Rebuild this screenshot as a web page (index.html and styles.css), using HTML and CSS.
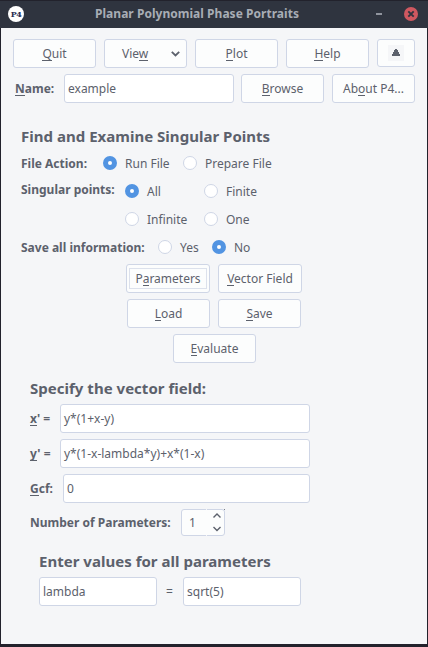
FILE: index.html
```
<!DOCTYPE html>
<html lang="en">
<head>
<meta charset="utf-8">
<title>Planar Polynomial Phase Portraits</title>
<link rel="stylesheet" href="styles.css">
</head>
<body>
<div class="window">
  <header class="titlebar">
    <span class="logo">P4</span>
    <h1 class="title">Planar Polynomial Phase Portraits</h1>
    <span class="minimize"></span>
    <svg class="close" width="14" height="14" viewBox="0 0 14 14"><circle cx="7" cy="7" r="7" fill="#cf5860"/><path d="M4.3 4.3l5.4 5.4M9.7 4.3l-5.4 5.4" stroke="#2f343f" stroke-width="1.9"/></svg>
  </header>
  <main class="content">
    <div class="row toolbar">
      <div class="btn"><span><u>Q</u>uit</span></div>
      <div class="btn menu"><span>Vie<u>w</u></span><svg class="chevron" width="9" height="6" viewBox="0 0 9 6"><path d="M.8 .8l3.7 3.7L8.2 .8" fill="none" stroke="#5c616c" stroke-width="1.8"/></svg></div>
      <div class="btn"><span><u>P</u>lot</span></div>
      <div class="btn"><span><u>H</u>elp</span></div>
      <div class="btn up"><span class="up-icon"><svg width="8" height="8" viewBox="0 0 8 8"><path d="M3 0h2v1h1v2h1v2h1v2H0V5h1V3h1V1h1z" fill="#5c616c"/></svg></span></div>
    </div>
    <div class="row name-row">
      <span class="label name-label"><u>N</u>ame:</span>
      <div class="field name-field">example</div>
      <div class="btn browse"><span><u>B</u>rowse</span></div>
      <div class="btn"><span>Ab<u>o</u>ut P4...</span></div>
    </div>

    <section class="find">
      <h2>Find and Examine Singular Points</h2>
      <div class="row options file-action">
        <span class="label">File Action:</span>
        <span class="option"><i class="radio on"></i><span>Run File</span></span>
        <span class="option"><i class="radio"></i><span>Prepare File</span></span>
      </div>
      <div class="row singular">
        <span class="label">Singular points:</span>
        <div class="points">
          <span class="option"><i class="radio on"></i><span>All</span></span>
          <span class="option"><i class="radio"></i><span>Finite</span></span>
          <span class="option"><i class="radio"></i><span>Infinite</span></span>
          <span class="option"><i class="radio"></i><span>One</span></span>
        </div>
      </div>
      <div class="row options save-info">
        <span class="label">Save all information:</span>
        <span class="option"><i class="radio"></i><span>Yes</span></span>
        <span class="option"><i class="radio on"></i><span>No</span></span>
      </div>
    </section>

    <div class="actions">
      <div class="row"><div class="btn wide focused"><span>P<u>a</u>rameters</span></div><div class="btn wide"><span><u>V</u>ector Field</span></div></div>
      <div class="row"><div class="btn"><span><u>L</u>oad</span></div><div class="btn"><span><u>S</u>ave</span></div></div>
      <div class="row evaluate"><div class="btn"><span><u>E</u>valuate</span></div></div>
    </div>

    <section class="vector">
      <h2>Specify the vector field:</h2>
      <div class="row"><span class="label"><u>x</u>' =</span><div class="field">y*(1+x-y)</div></div>
      <div class="row"><span class="label"><u>y</u>' =</span><div class="field">y*(1-x-lambda*y)+x*(1-x)</div></div>
      <div class="row gcf"><span class="label"><u>G</u>cf:</span><div class="field">0</div></div>
      <div class="row count"><span class="label">Number of Parameters:</span>
        <div class="spin"><span class="spin-value">1</span><svg class="arrows" width="19" height="27" viewBox="0 0 19 27"><path d="M7.5 8.5L11 5l3.5 3.5M7.5 18l3.5 3.5 3.5-3.5" fill="none" stroke="#5c616c" stroke-width="1.4"/><path d="M0 0h1v1H0zM0 26h1v1H0z" fill="#f5f6f8"/><path d="M18 0h1v1h-1z" fill="#7b808a"/></svg></div>
      </div>
    </section>

    <section class="values">
      <h2>Enter values for all parameters</h2>
      <div class="row"><div class="field">lambda</div><span class="equals">=</span><div class="field">sqrt(5)</div></div>
    </section>
  </main>
</div>
</body>
</html>
```
FILE: styles.css
```
* { box-sizing: border-box; }

body {
  margin: 0;
  font: 12px/16px "Noto Sans", sans-serif;
  color: #5c616c;
  background: #22222c;
}

.window {
  width: 428px;
  height: 647px;
  padding: 0 1px 3px;
  background: #22222c;
}

.titlebar {
  display: flex;
  align-items: center;
  height: 28px;
  margin: 0 -1px;
  padding: 0 10px 1px 8px;
  background: #2f343f;
  border-top: 1px solid #22222c;
}

.logo {
  width: 16px;
  height: 16px;
  border-radius: 50%;
  background: #fff;
  color: #292c50;
  font: bold 8px/16px "DejaVu Serif", serif;
  letter-spacing: -0.5px;
  text-align: center;
}

.title {
  width: 205px;
  margin: 0 0 0 71px;
  font-size: 12px;
  line-height: 16px;
  letter-spacing: 0.03px;
  color: #a8adb5;
  white-space: nowrap;
}

.minimize {
  width: 6px;
  height: 2px;
  margin-left: 76px;
  background: #90949e;
}

.close { margin-left: auto; }

.content {
  height: 616px;
  padding: 11px 12px 0;
  background: #f5f6f8;
}

.row { display: flex; }

.btn {
  display: flex;
  align-items: center;
  justify-content: center;
  flex: none;
  width: 83px;
  height: 29px;
  border: 1px solid #cfd6e6;
  border-radius: 3px;
  background: #fcfdfd;
  white-space: nowrap;
}

u {
  text-decoration: none;
  background: linear-gradient(#5c616c, #5c616c) 0 calc(100% - 1px) / 100% 1px no-repeat;
}

.toolbar { gap: 8px; }
.menu { justify-content: space-between; padding: 0 6px 0 17px; }
.up { width: 38px; height: 28px; }

.up-icon {
  display: flex;
  align-items: center;
  justify-content: center;
  width: 16px;
  height: 16px;
  background: #f5f6f8;
}

.name-row { margin-top: 6px; align-items: center; }
.name-label { width: 51px; padding-left: 2px; }
.label { flex: none; font-weight: bold; white-space: nowrap; }

.field {
  flex: none;
  width: 250px;
  height: 29px;
  padding: 0 3px;
  border: 1px solid #cfd6e6;
  border-radius: 3px;
  background: #fff;
  line-height: 27px;
  white-space: nowrap;
}

.name-row .name-field { width: 170px; }
.browse { margin: 0 8px 0 7px; }

h2 {
  margin: 0;
  font-size: 15px;
  line-height: 20px;
  letter-spacing: 0.02px;
  white-space: nowrap;
}

.find { margin-top: 23px; padding-left: 8px; }
.find .label { padding-top: 1px; }
.options { height: 16px; }
.file-action { margin-top: 9px; }
.file-action .label { width: 82px; }
.file-action .option:nth-child(2) { width: 80px; }

.option {
  display: flex;
  align-items: center;
  height: 16px;
  gap: 8px;
  white-space: nowrap;
}

.option > span { padding-top: 2px; }

.radio {
  width: 14px;
  height: 14px;
  border: 1px solid #cfd6e6;
  border-radius: 50%;
  background: #fff;
}

.radio.on { border: 5px solid #5294e2; }

.singular { margin-top: 10px; }
.singular .label { width: 104px; }
.points {
  display: grid;
  grid-template-columns: 79px auto;
  row-gap: 12px;
  padding-top: 2px;
}

.save-info { margin-top: 12px; }
.save-info .label { width: 137px; }
.save-info .option:nth-child(2) { width: 54px; }

.actions {
  display: flex;
  flex-direction: column;
  align-items: center;
  gap: 6px;
  margin-top: 9px;
}
.actions .row { gap: 8px; }
.actions .wide { width: 84px; }
.evaluate { padding-left: 1px; }

.focused > span {
  width: 78px;
  height: 21px;
  line-height: 19px;
  text-align: center;
  border: 1px solid #dce1ec;
}

.vector { margin-top: 15px; padding-left: 17px; }
.vector .row { align-items: center; margin-top: 6px; }
.vector .label { width: 30px; }
.vector .gcf .label { width: 33px; }
.vector .gcf .field { width: 247px; }
.vector .count .label { width: 151px; }

.spin {
  display: flex;
  align-items: center;
  justify-content: space-between;
  width: 44px;
  height: 27px;
  padding-left: 7px;
  border: 1px solid #cfd6e6;
  border-radius: 3px;
  background: #fcfdfd;
}

.arrows { flex: none; margin: -1px -1px -1px 0; }

.values { margin-top: 15px; padding-left: 26px; }
.values .row { align-items: center; margin-top: 6px; }
.values .field { width: 118px; }
.equals { width: 26px; padding-right: 1px; text-align: center; }
```
